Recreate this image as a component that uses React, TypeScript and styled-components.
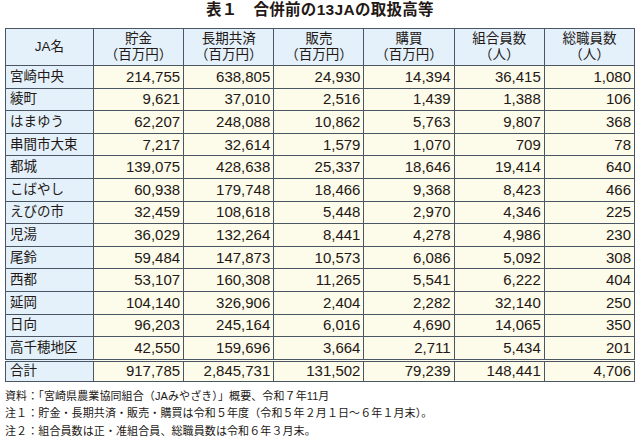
import React from "react";
import styled, { createGlobalStyle } from "styled-components";

const Global = createGlobalStyle`
  html, body { margin: 0; padding: 0; background: #fff; }
  body { font-family: "Liberation Sans", "Noto Sans CJK JP", sans-serif; color: #231815; }
`;

const Page = styled.div`
  width: 640px;
  height: 437px;
  box-sizing: border-box;
  padding: 0 5px;
  display: flex;
  flex-direction: column;
`;

const Title = styled.h1`
  margin: 0 0 8px 0;
  font-size: 15.5px;
  line-height: 20px;
  font-weight: bold;
  text-align: center;
  letter-spacing: 0.3px;
`;

const Table = styled.table`
  border-collapse: collapse;
  width: 630px;
  table-layout: fixed;
  border: 1px solid #4a5663;
`;

const Th = styled.th`
  background: #e4f1fb;
  border: 1px solid #4a5663;
  font-weight: normal;
  font-size: 13.5px;
  line-height: 16px;
  height: 36px;
  padding: 0;
  text-align: center;
  vertical-align: middle;
`;

const Td = styled.td<{ $name?: boolean; $total?: boolean }>`
  background: ${(p) => (p.$name ? "#e4f1fb" : "#fdfbea")};
  border: 1px solid #4a5663;
  ${(p) => (p.$total ? "border-top: 3px double #4a5663;" : "")}
  height: ${(p) => (p.$total ? "19px" : "21.6px")};
  padding: ${(p) => (p.$name ? "0 0 0 4px" : "0 3px 0 0")};
  text-align: ${(p) => (p.$name ? "left" : "right")};
  font-size: ${(p) => (p.$name ? "13.5px" : "15px")};
  white-space: nowrap;
  line-height: 16px;
`;

const Notes = styled.div`
  margin-top: 6px;
  font-size: 11px;
  line-height: 17.4px;
  letter-spacing: 0.1px;
`;

const rows: [string, string[]][] = [
  ["宮崎中央", ["214,755", "638,805", "24,930", "14,394", "36,415", "1,080"]],
  ["綾町", ["9,621", "37,010", "2,516", "1,439", "1,388", "106"]],
  ["はまゆう", ["62,207", "248,088", "10,862", "5,763", "9,807", "368"]],
  ["串間市大束", ["7,217", "32,614", "1,579", "1,070", "709", "78"]],
  ["都城", ["139,075", "428,638", "25,337", "18,646", "19,414", "640"]],
  ["こばやし", ["60,938", "179,748", "18,466", "9,368", "8,423", "466"]],
  ["えびの市", ["32,459", "108,618", "5,448", "2,970", "4,346", "225"]],
  ["児湯", ["36,029", "132,264", "8,441", "4,278", "4,986", "230"]],
  ["尾鈴", ["59,484", "147,873", "10,573", "6,086", "5,092", "308"]],
  ["西都", ["53,107", "160,308", "11,265", "5,541", "6,222", "404"]],
  ["延岡", ["104,140", "326,906", "2,404", "2,282", "32,140", "250"]],
  ["日向", ["96,203", "245,164", "6,016", "4,690", "14,065", "350"]],
  ["高千穂地区", ["42,550", "159,696", "3,664", "2,711", "5,434", "201"]],
];

const total: string[] = ["917,785", "2,845,731", "131,502", "79,239", "148,441", "4,706"];

const headers: [string, string][] = [
  ["貯金", "（百万円）"],
  ["長期共済", "（百万円）"],
  ["販売", "（百万円）"],
  ["購買", "（百万円）"],
  ["組合員数", "（人）"],
  ["総職員数", "（人）"],
];

export default function App() {
  return (
    <>
      <Global />
      <Page>
        <Title>表１　合併前の13JAの取扱高等</Title>
        <Table>
          <colgroup>
            <col style={{ width: 88 }} />
            <col />
            <col />
            <col />
            <col />
            <col />
            <col />
          </colgroup>
          <thead>
            <tr>
              <Th>JA名</Th>
              {headers.map(([a, b]) => (
                <Th key={a}>
                  {a}
                  <br />
                  {b}
                </Th>
              ))}
            </tr>
          </thead>
          <tbody>
            {rows.map(([name, vals]) => (
              <tr key={name}>
                <Td $name>{name}</Td>
                {vals.map((v, i) => (
                  <Td key={i}>{v}</Td>
                ))}
              </tr>
            ))}
            <tr>
              <Td $name $total>合計</Td>
              {total.map((v, i) => (
                <Td key={i} $total>{v}</Td>
              ))}
            </tr>
          </tbody>
        </Table>
        <Notes>
          <div>資料：「宮崎県農業協同組合（JAみやざき）」概要、令和７年11月</div>
          <div>注１：貯金・長期共済・販売・購買は令和５年度（令和５年２月１日～６年１月末）。</div>
          <div>注２：組合員数は正・准組合員、総職員数は令和６年３月末。</div>
        </Notes>
      </Page>
    </>
  );
}
